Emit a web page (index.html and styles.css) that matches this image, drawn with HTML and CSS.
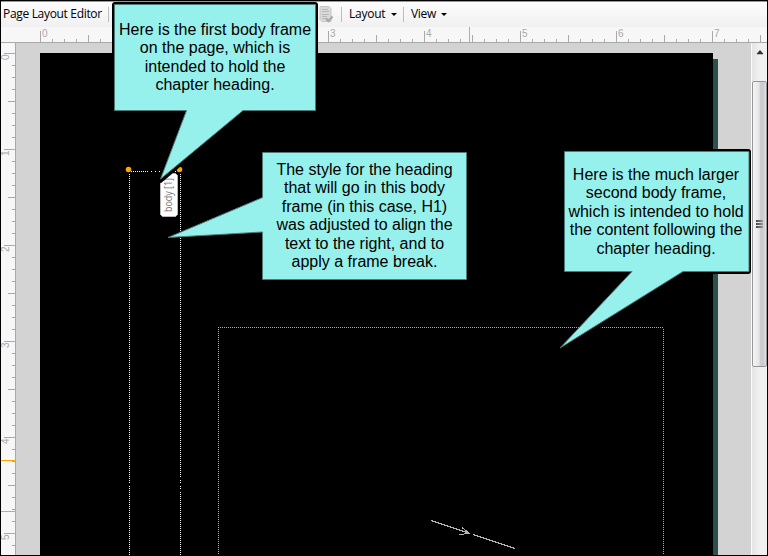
FILE: index.html
```html
<!DOCTYPE html>
<html lang="en">
<head>
<meta charset="utf-8">
<title>Page Layout Editor</title>
<link rel="stylesheet" href="styles.css">
</head>
<body>
<div class="window">
  <header class="toolbar">
    <span class="title">Page Layout Editor</span>
    <i class="divider"></i>
    <svg class="doc-icon" width="15" height="18" viewBox="0 0 15 18"><path d="M1 .5h9l2 2v13H3l-2-2z" fill="#dadada" stroke="#c5c5c5"/><path d="M3 3.500h6M3 5.500h7M3 8.500h7M3 10.500h5M3 12.500h4" stroke="#b7b7b7"/><path d="M7 12.500l2.500 2.500 4-4.500" fill="none" stroke="#a9a9a9" stroke-width="2.400"/></svg>
    <i class="divider"></i>
    <span class="menu layout">Layout</span><i class="caret"></i>
    <i class="divider second"></i>
    <span class="menu view">View</span><i class="caret"></i>
  </header>
  <div class="ruler-top">
    <svg width="766" height="16" viewBox="1 27 766 16" shape-rendering="crispEdges">
      <defs>
        <pattern id="hx" x="40" y="27" width="96" height="16" patternUnits="userSpaceOnUse"><path d="M0 4h1v12h-1zM12 12h1v4h-1zM24 12h1v4h-1zM36 12h1v4h-1zM48 8h1v8h-1zM60 12h1v4h-1zM72 12h1v4h-1zM84 12h1v4h-1z" fill="#a9a9a9"/></pattern>
      </defs>
      <path d="M40 27h727v16H40z" fill="url(#hx)"/>
      <path d="M1 42h766v1H1z" fill="#a9a9a9"/>
      <path class="marker" d="M469 27h1v15h-1z"/>
      <g class="num"><text x="42" y="36.500">0</text><text x="330" y="36.500">3</text><text x="426" y="36.500">4</text><text x="522" y="36.500">5</text><text x="618" y="36.500">6</text><text x="714" y="36.500">7</text></g>
    </svg>
  </div>
  <main class="workspace">
    <div class="ruler-side">
      <svg width="15" height="512" viewBox="1 43 15 512" shape-rendering="crispEdges">
        <defs>
          <pattern id="vx" x="0" y="53" width="16" height="96" patternUnits="userSpaceOnUse"><path d="M4 0h12v1H4zM12 12h4v1h-4zM12 24h4v1h-4zM12 36h4v1h-4zM8 48h8v1H8zM12 60h4v1h-4zM12 72h4v1h-4zM12 84h4v1h-4z" fill="#a9a9a9"/></pattern>
        </defs>
        <path d="M1 53h15v502H1z" fill="url(#vx)"/>
        <path d="M15 43h1v512h-1z" fill="#a9a9a9"/>
        <path class="marker" d="M1 460h15v1H1zM1 511h15v1H1z"/>
        <g class="num"><text transform="translate(9 60) rotate(-90)">0</text><text transform="translate(9 156) rotate(-90)">1</text><text transform="translate(9 252) rotate(-90)">2</text><text transform="translate(9 348) rotate(-90)">3</text><text transform="translate(9 444) rotate(-90)">4</text><text transform="translate(9 540) rotate(-90)">5</text></g>
      </svg>
    </div>
    <div class="canvas">
      <div class="page"></div>
      <div class="page-shadow"></div>
    </div>
    <div class="scrollbar">
      <svg class="up" width="8" height="5" viewBox="0 0 8 5"><path d="M4 0l3.500 4h-7z" fill="#333"/><path d="M1 4.500h6" stroke="#bbb"/></svg>
      <div class="thumb"><i></i><i></i><i></i></div>
    </div>
  </main>
</div>

<svg class="frames" width="768" height="556" viewBox="0 0 768 556">
  <g fill="none" stroke="#fff" stroke-dasharray="1 1" shape-rendering="crispEdges">
    <path d="M129.500 174V555M180.500 174V555M131 171.500H148M151 171.500H152M155 171.500H156M159 171.500H160M175 171.500H176"/>
    <path class="frame-active" d="M218 327.500H664M218.500 329V555M663.500 329V555"/>
  </g>
  <path d="M128 483h3v3h-3zM179 477h3v3h-3zM179 483h3v3h-3zM179 489h3v3h-3z" fill="#000"/>
  <circle class="marker" cx="128.500" cy="169.500" r="2.800"/>
  <circle class="marker" cx="179.500" cy="169.500" r="2.800"/>
  <g fill="none" stroke="#b5b5b5" shape-rendering="crispEdges">
    <path d="M431 520.500L470 533.500M473 534.500L515 548.500"/>
    <path d="M462 527.500L469 533M459 534.500L469 533.500M465 531.500L470 533.500M464 534L469 532.500"/>
  </g>
  <path d="M160.500 183L172 173.500H175.500L177.500 175.500V214.500L175.500 216.500H162.500L160.500 214.500Z" fill="#fff" stroke="#b8b8b8"/>
  <text class="tag" transform="translate(172 212) rotate(-90)" textLength="34" lengthAdjust="spacingAndGlyphs">body [1]</text>
</svg>

<svg class="callouts" width="768" height="556" viewBox="0 0 768 556">
  <path d="M112 110V5Q112 2 115 2H315Q318 2 318 5V108Q318 113 315 113H112Z" fill="#000"/>
  <path d="M180 110L158.500 182L161 183L244 113V107Z" fill="#000"/>
  <path d="M114.500 4.500H315.500V110.500H243L160.500 179L186.500 110.500H114.500Z"/>
  <path d="M262.500 152.500H466.500V279.500H262.500V232L168 237.500L262.500 197.500Z"/>
  <path d="M562 149H748Q751 149 751 152V271Q751 274 748 274H562Z" fill="#000"/>
  <path d="M682 270L689 272L562 352L558 349Z" fill="#000"/>
  <path d="M564.500 151.500H749V271.500H683L560 348L632 271.500H564.500Z"/>
</svg>
<div class="note first">Here is the first body frame<br>on the page, which is<br>intended to hold the<br>chapter heading.</div>
<div class="note middle">The style for the heading<br>that will go in this body<br>frame (in this case, H1)<br>was adjusted to align the<br>text to the right, and to<br>apply a frame break.</div>
<div class="note last">Here is the much larger<br>second body frame,<br>which is intended to hold<br>the content following the<br>chapter heading.</div>
</body>
</html>
```

FILE: styles.css
```css
* { box-sizing: border-box; }
body { margin: 0; width: 768px; height: 556px; overflow: hidden; position: relative; }
svg { display: block; }
.window {
  width: 768px;
  height: 556px;
  border: 1px solid #000;
  display: flex;
  flex-direction: column;
  background: #f7f7f7;
}
.toolbar {
  height: 26px;
  border-top: 1px solid #999;
  background: linear-gradient(#fdfdfd, #f0f0f0);
  display: flex;
  align-items: center;
  font: 12px/16px "Open Sans", sans-serif;
  color: #000;
}
.title, .menu { white-space: nowrap; padding-bottom: 1px; }
.title { width: 99px; margin-left: 2px; letter-spacing: -0.32px; }
.divider { width: 1px; height: 15px; background: #bdbdbd; margin-left: 6px; }
.doc-icon { margin-left: 210px; }
.doc-icon + .divider { margin-left: 7px; }
.layout { width: 36px; margin-left: 7px; letter-spacing: -0.25px; }
.view { width: 25px; margin-left: 7px; letter-spacing: -0.3px; }
.caret {
  margin-left: 6px;
  border: 3px solid transparent;
  border-top-color: #000;
  border-bottom: 0;
}
.divider.second { margin-left: 6px; }
.view + .caret { margin-left: 5px; }
.ruler-top { height: 16px; flex: none; }
.num { font: 10px "Liberation Sans", sans-serif; fill: #a9a9a9; }
.marker { fill: #ffa500; }
.frame-active { stroke: #ffa500; }
.workspace { flex: 1; display: flex; min-height: 0; }
.ruler-side { width: 15px; }
.canvas { flex: 1; background: #d3d3d3; display: flex; padding: 10px 0 0 24px; }
.page { width: 673px; background: #000; }
.page-shadow { width: 5px; margin-top: 6px; background: #2f4f4f; }
.scrollbar {
  width: 16px;
  border-left: 1px solid #fafafa;
  background: linear-gradient(90deg, #e4e4e4, #f0f0f0 50%);
}
.up { margin: 7px 0 0 4px; }
.thumb {
  height: 286px;
  margin-top: 26px;
  border: 1px solid #979797;
  border-radius: 2px;
  background: linear-gradient(90deg, #f5f5f5, #e6e6e8 45%, #c9c9ce 60%, #cfcfd4 85%, #e4e4e6);
  display: flex;
  flex-direction: column;
  align-items: center;
  justify-content: center;
  gap: 1px;
}
.thumb i { width: 7px; height: 2px; background: linear-gradient(90deg, #444, #999); }
.frames, .callouts { position: absolute; left: 0; top: 0; }
.tag { font: 10px "Open Sans", sans-serif; fill: #777; }
.callouts path { stroke: #4c7a78; fill: #96f0ec; }
.callouts path[fill="#000"] { fill: #000; stroke: none; }
.note {
  position: absolute;
  font: 16px/18.400px "Liberation Sans", Arial, sans-serif;
  color: #000;
  text-align: center;
  white-space: nowrap;
}
.first { left: 115px; top: 21px; width: 200px; }
.middle { left: 263px; top: 161px; width: 203px; }
.last { left: 564px; top: 166px; width: 184px; }
```
